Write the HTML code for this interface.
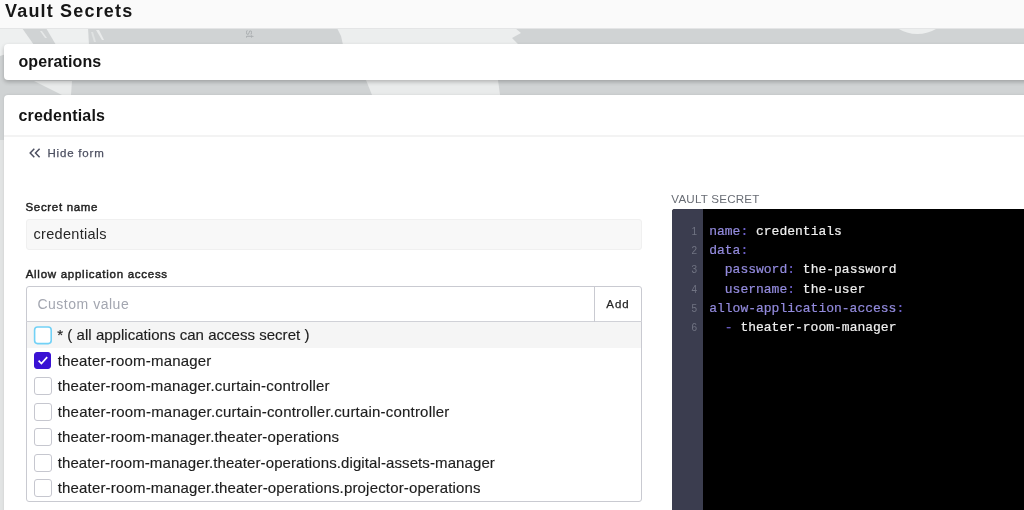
<!DOCTYPE html>
<html>
<head>
<meta charset="utf-8">
<style>
*{box-sizing:border-box;margin:0;padding:0}
html,body{width:1024px;height:510px;overflow:hidden}
body{font-family:"Liberation Sans",sans-serif;background:#d0d3d4;position:relative;color:#1b1b1b}
.abs{position:absolute}
#hdr{left:0;top:0;width:1024px;height:29px;background:#fafafa;border-bottom:1px solid #e4e5e6}
#title{left:5px;top:-1px;font-size:18px;font-weight:bold;line-height:24px;letter-spacing:1.18px;color:#161616;white-space:nowrap}
.patch{background:#eceeee}
#card1{left:4px;top:44px;width:1030px;height:36px;background:#fff;border-radius:4px;box-shadow:0 2px 4px rgba(0,0,0,.24)}
#card2{left:4px;top:95px;width:1030px;height:430px;background:#fff;border-radius:4px;box-shadow:0 0 3px rgba(0,0,0,.1)}
.ctitle{font-size:16px;font-weight:bold;white-space:nowrap;color:#141414;line-height:20px}
#sep{left:4px;top:135px;width:1020px;height:2px;background:#f3f3f3}
#hide{left:47.5px;top:146.4px;font-size:11.5px;line-height:14px;color:#4d5061;letter-spacing:.8px;-webkit-text-stroke:.25px #4d5061;white-space:nowrap}
.lbl{font-size:11.5px;font-weight:normal;-webkit-text-stroke:.45px #1f1f1f;color:#1f1f1f;white-space:nowrap;line-height:13px}
#inp1{left:26px;top:219px;width:616px;height:30.5px;background:#f8f8f8;border:1px solid #f0f0f0;border-radius:3px}
#inp1t{left:33.5px;top:225px;font-size:14.5px;line-height:18px;color:#262626;white-space:nowrap;letter-spacing:.3px}
#box{left:25.5px;top:286px;width:616.5px;height:215.5px;border:1px solid #c9cad1;border-radius:3px;background:#fff}
#cv{left:25.5px;top:286px;width:616.5px;height:36px;border-bottom:1.5px solid #d0d1d7}
#cvt{left:37.4px;top:295px;font-size:14px;line-height:18px;color:#a3a6b0;white-space:nowrap;letter-spacing:.52px}
#div{left:594px;top:287px;width:1px;height:35px;background:#c9cad1}
#add{left:606.3px;top:297px;font-size:11.5px;line-height:14px;color:#262626;letter-spacing:1px;white-space:nowrap;-webkit-text-stroke:.25px #262626}
#hl{left:26.5px;top:322px;width:614.5px;height:25.5px;background:#f5f5f5}
.cb{left:34px;width:17px;height:17px;border:1px solid #c6c7cf;border-radius:3px;background:#fff}
.row{left:57.7px;font-size:15px;line-height:18px;color:#1d1d1d;white-space:nowrap;letter-spacing:.13px;-webkit-text-stroke:.15px #1d1d1d}
#vs{left:671.3px;top:192px;font-size:11.6px;line-height:14px;color:#686c74;white-space:nowrap;letter-spacing:.22px}
#ed{left:672px;top:208.5px;width:360px;height:310px;background:#000;border-radius:3px 0 0 0;overflow:hidden}
#gut{left:0;top:0;width:31px;height:310px;background:#3b3d4f}
.ln{left:0;width:25px;text-align:right;font-size:10px;line-height:12px;color:#717483;font-family:"Liberation Sans",sans-serif}
.cl{left:37.2px;font-family:"Liberation Mono",monospace;font-size:13px;line-height:19px;white-space:pre;color:#efefef;-webkit-text-stroke:.2px #efefef}
.k{color:#938bde;-webkit-text-stroke:.2px #938bde}.p{color:#6c60c8;-webkit-text-stroke:.2px #6c60c8}
</style>
</head>
<body>
<div id="wrap" style="position:absolute;left:0;top:0;width:1024px;height:510px;will-change:transform">
<svg class="abs" style="left:0;top:0" width="1024" height="510" viewBox="0 0 1024 510">
<rect x="0" y="0" width="1024" height="510" fill="#d0d3d4"/>
<!-- top strip light areas -->
<polygon points="0,28 22,28 34,45 0,56" fill="#eef0f0"/>
<polygon points="46,28 88,28 89,45 56,45" fill="#eef0f0"/>
<polygon points="96,30 99,30 104,40 102,40" fill="#e9ebeb"/>
<polygon points="91,32 93,32 96,42 94,42" fill="#dfe2e2"/>
<polygon points="40,31 42,31 47,38 45,38" fill="#e6e8e8"/>
<polygon points="337,28 515,28 521,33 512,38 519,45 343,45 341,36" fill="#eceeee"/>
<path d="M897 28 Q917 40 938 28 Z" fill="#eceeee"/>
<text x="246" y="30" font-family="Liberation Sans" font-size="10" fill="#a9adaf" transform="rotate(90 246 30)">st</text>
<!-- mid strip -->
<polygon points="34,81 72,81 71,95 62,95" fill="#e9ebeb"/>
<polygon points="366,80 498,80 500,95 372,95" fill="#e9ebeb"/>
<!-- left strip -->
<rect x="0" y="140" width="5" height="370" fill="#e2e4e4"/>
</svg>
<div id="hdr" class="abs"></div>
<div id="title" class="abs">Vault Secrets</div>

<div id="card1" class="abs"></div>
<div class="abs ctitle" style="left:18.5px;top:52px;letter-spacing:.1px">operations</div>

<div id="card2" class="abs"></div>
<div class="abs ctitle" style="left:18.5px;top:106px;letter-spacing:.2px">credentials</div>
<div id="sep" class="abs"></div>

<svg class="abs" style="left:29px;top:148px" width="12" height="10" viewBox="0 0 12 10"><path d="M5.3 0.8 L1.2 5 L5.3 9.2 M10.6 0.8 L6.5 5 L10.6 9.2" fill="none" stroke="#4d5061" stroke-width="1.5"/></svg>
<div id="hide" class="abs">Hide form</div>

<div class="abs lbl" style="left:25.5px;top:201px;letter-spacing:.68px">Secret name</div>
<div id="inp1" class="abs"></div>
<div id="inp1t" class="abs">credentials</div>

<div class="abs lbl" style="left:25.7px;top:268px;letter-spacing:.73px">Allow application access</div>
<div id="box" class="abs"></div>
<div id="cv" class="abs"></div>
<div id="cvt" class="abs">Custom value</div>
<div id="div" class="abs"></div>
<div id="add" class="abs">Add</div>
<div id="hl" class="abs"></div>

<svg class="abs" style="left:33px;top:325px" width="20" height="20" viewBox="0 0 20 20"><rect x="1.6" y="2.0" width="16.6" height="16.6" rx="3" ry="3" fill="#fff" stroke="#72d1f6" stroke-width="1.6"/></svg>
<div class="abs cb" style="top:352px;border-color:#3a12d4;background:#3a12d4"></div>
<svg class="abs" style="left:34px;top:352px" width="17" height="17" viewBox="0 0 17 17"><path d="M4.6 8.7 L7.4 11.5 L13.2 5.1" fill="none" stroke="#fff" stroke-width="1.7"/></svg>
<div class="abs cb" style="top:377px;width:18px;height:18px"></div>
<div class="abs cb" style="top:403px;width:18px;height:18px"></div>
<div class="abs cb" style="top:428px;width:18px;height:18px"></div>
<div class="abs cb" style="top:454px;width:18px;height:18px"></div>
<div class="abs cb" style="top:479px;width:18px;height:18px"></div>

<div class="abs row" style="top:326px;left:57.3px;letter-spacing:.03px">* ( all applications can access secret )</div>
<div class="abs row" style="top:351.5px;letter-spacing:.185px">theater-room-manager</div>
<div class="abs row" style="top:377px;letter-spacing:.176px">theater-room-manager.curtain-controller</div>
<div class="abs row" style="top:402.5px;letter-spacing:.2px">theater-room-manager.curtain-controller.curtain-controller</div>
<div class="abs row" style="top:428px;letter-spacing:.163px">theater-room-manager.theater-operations</div>
<div class="abs row" style="top:453.5px;letter-spacing:.1px">theater-room-manager.theater-operations.digital-assets-manager</div>
<div class="abs row" style="top:479px;letter-spacing:.173px">theater-room-manager.theater-operations.projector-operations</div>

<div id="vs" class="abs">VAULT SECRET</div>
<div id="ed" class="abs">
  <div id="gut" class="abs"></div>
  <div class="abs ln" style="top:17.5px">1</div>
  <div class="abs ln" style="top:36.7px">2</div>
  <div class="abs ln" style="top:55.9px">3</div>
  <div class="abs ln" style="top:75.1px">4</div>
  <div class="abs ln" style="top:94.3px">5</div>
  <div class="abs ln" style="top:113.5px">6</div>
  <div class="abs cl" style="top:13.5px"><span class="k">name</span><span class="p">:</span> credentials</div>
  <div class="abs cl" style="top:32.7px"><span class="k">data</span><span class="p">:</span></div>
  <div class="abs cl" style="top:51.9px">  <span class="k">password</span><span class="p">:</span> the-password</div>
  <div class="abs cl" style="top:71.1px">  <span class="k">username</span><span class="p">:</span> the-user</div>
  <div class="abs cl" style="top:90.3px"><span class="k">allow-application-access</span><span class="p">:</span></div>
  <div class="abs cl" style="top:109.5px">  <span class="p">-</span> theater-room-manager</div>
</div>
</div>
</body>
</html>
